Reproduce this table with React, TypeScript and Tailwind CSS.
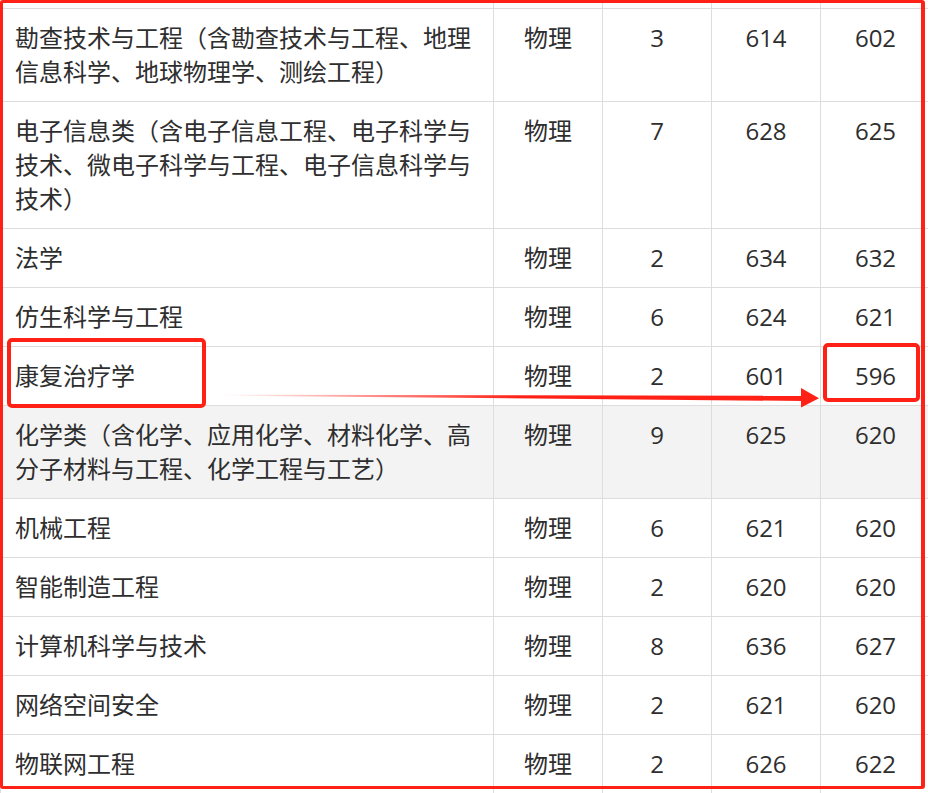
import React from 'react';

type Row = { name: string; subject: string; count: string; max: string; min: string; shaded?: boolean };

const rows: Row[] = [
  { name: '勘查技术与工程（含勘查技术与工程、地理信息科学、地球物理学、测绘工程）', subject: '物理', count: '3', max: '614', min: '602' },
  { name: '电子信息类（含电子信息工程、电子科学与技术、微电子科学与工程、电子信息科学与技术）', subject: '物理', count: '7', max: '628', min: '625' },
  { name: '法学', subject: '物理', count: '2', max: '634', min: '632' },
  { name: '仿生科学与工程', subject: '物理', count: '6', max: '624', min: '621' },
  { name: '康复治疗学', subject: '物理', count: '2', max: '601', min: '596' },
  { name: '化学类（含化学、应用化学、材料化学、高分子材料与工程、化学工程与工艺）', subject: '物理', count: '9', max: '625', min: '620', shaded: true },
  { name: '机械工程', subject: '物理', count: '6', max: '621', min: '620' },
  { name: '智能制造工程', subject: '物理', count: '2', max: '620', min: '620' },
  { name: '计算机科学与技术', subject: '物理', count: '8', max: '636', min: '627' },
  { name: '网络空间安全', subject: '物理', count: '2', max: '621', min: '620' },
  { name: '物联网工程', subject: '物理', count: '2', max: '626', min: '622' },
];

const cell = 'border border-[#dddddd] pt-3 pb-3 align-top leading-[34px]';

export default function App() {
  return (
    <div
      className="relative h-[793px] w-[928px] overflow-hidden bg-white text-[24px] text-[#2e2e2e]"
      style={{ fontFamily: '"Open Sans", "Noto Sans CJK SC", sans-serif' }}
    >
      <table className="w-[930px] table-fixed border-collapse">
        <colgroup>
          <col className="w-[493px]" />
          <col className="w-[109px]" />
          <col className="w-[109px]" />
          <col className="w-[109px]" />
          <col className="w-[110px]" />
        </colgroup>
        <tbody>
          <tr className="h-[8px]">
            <td className="border border-t-0 border-[#dddddd] p-0" />
            <td className="border border-t-0 border-[#dddddd] p-0" />
            <td className="border border-t-0 border-[#dddddd] p-0" />
            <td className="border border-t-0 border-[#dddddd] p-0" />
            <td className="border border-t-0 border-[#dddddd] p-0" />
          </tr>
          {rows.map((r) => (
            <tr key={r.name} className={r.shaded ? 'bg-[#f3f3f3]' : ''}>
              <td className={`${cell} pl-[14px] pr-4 text-left`}>{r.name}</td>
              <td className={`${cell} px-4 text-center`}>{r.subject}</td>
              <td className={`${cell} px-4 text-center`}>{r.count}</td>
              <td className={`${cell} px-4 text-center`}>{r.max}</td>
              <td className={`${cell} px-4 text-center`}>{r.min}</td>
            </tr>
          ))}
        </tbody>
      </table>

      {/* annotations */}
      <div className="pointer-events-none absolute left-0 top-0 h-[789px] w-[925px] rounded-[3px] border-[3px] border-r-4 border-[#ff2116]" />
      <div className="pointer-events-none absolute left-[7px] top-[338px] h-[70px] w-[199px] rounded-[5px] border-4 border-[#ff2116]" />
      <div className="pointer-events-none absolute left-[823px] top-[343px] h-[59px] w-[97px] rounded-[5px] border-4 border-[#ff2116]" />
      <svg className="pointer-events-none absolute left-0 top-0" width="928" height="793" viewBox="0 0 928 793">
        <defs>
          <linearGradient id="fade" x1="222" y1="0" x2="520" y2="0" gradientUnits="userSpaceOnUse">
            <stop offset="0" stopColor="#ff2116" stopOpacity="0" />
            <stop offset="1" stopColor="#ff2116" stopOpacity="1" />
          </linearGradient>
        </defs>
        <polygon points="222,394.6 803,395.8 803,401 222,395.6" fill="url(#fade)" />
        <polygon points="801,388 819,398.3 801,407.5" fill="#ff2116" />
      </svg>
    </div>
  );
}
